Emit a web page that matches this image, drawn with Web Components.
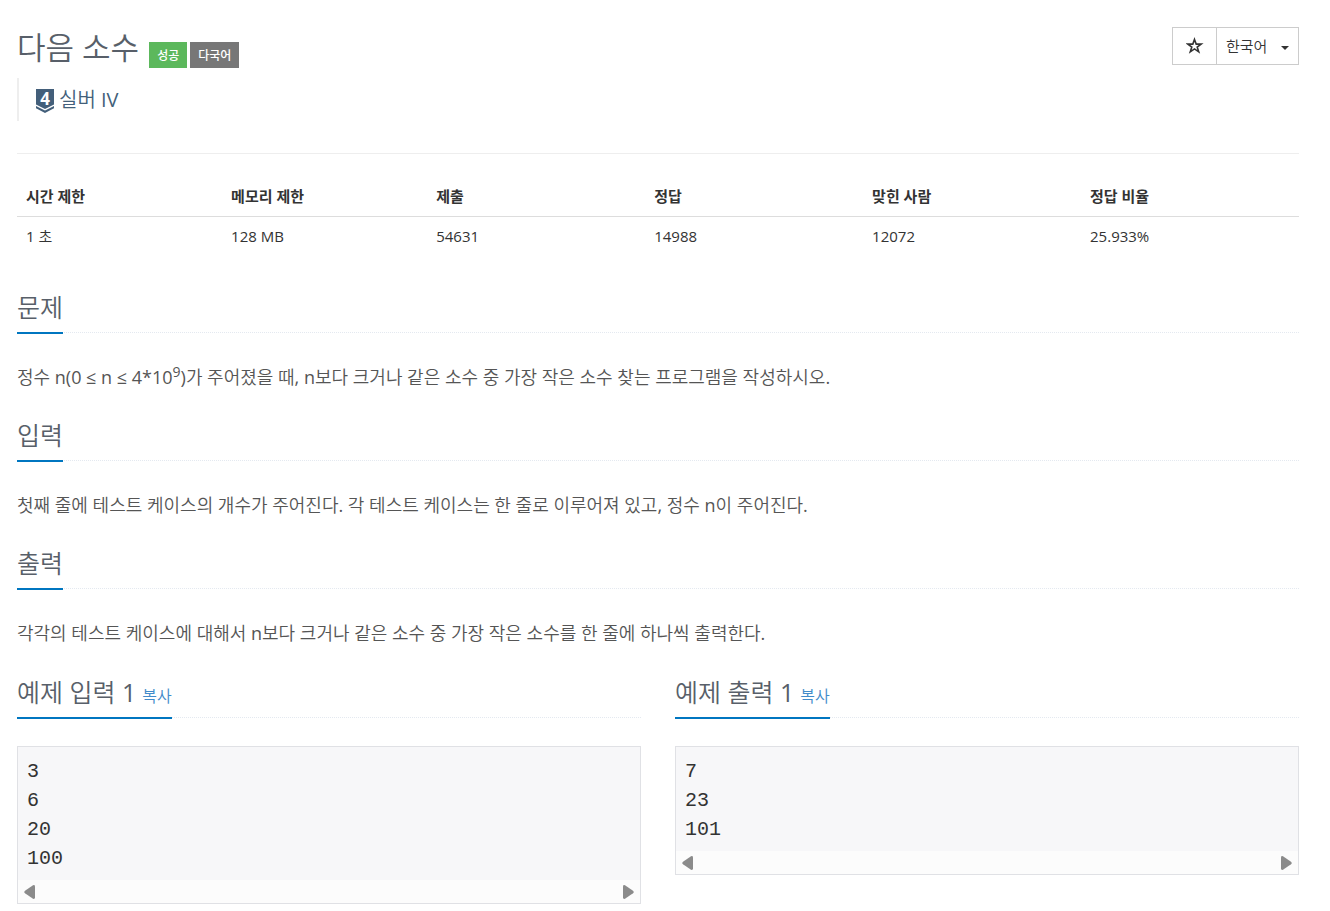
<!DOCTYPE html>
<html lang="ko">
<head>
<meta charset="utf-8">
<meta name="viewport" content="width=device-width, initial-scale=1">
<title>다음 소수</title>
<style>
    body {
        margin: 0;
        padding: 24px 31px 7px 17px;
        background: #fff;
        color: #333;
        font-family: "Open Sans", "Noto Sans CJK KR DemiLight", "Noto Sans CJK KR", sans-serif;
        font-size: 15px;
        line-height: 20px;
    }
    .samples {
        display: grid;
        grid-template-columns: 1fr 1fr;
        gap: 34px;
        align-items: start;
        padding-top: 1px;
    }
</style>
</head>
<body>
    <problem-header>
        다음 소수
        <problem-label slot="labels" type="success">성공</problem-label>
        <problem-label slot="labels">다국어</problem-label>
        <problem-toolbar slot="tools"></problem-toolbar>
    </problem-header>
    <problem-tier level="4">실버 IV</problem-tier>
    <problem-info time="1 초" memory="128 MB" submit="54631" accepted="14988" solved="12072" ratio="25.933%"></problem-info>

    <problem-section heading="문제">정수 n(0 ≤ n ≤ 4*10<sup>9</sup>)가 주어졌을 때, n보다 크거나 같은 소수 중 가장 작은 소수 찾는 프로그램을 작성하시오.</problem-section>
    <problem-section heading="입력">첫째 줄에 테스트 케이스의 개수가 주어진다. 각 테스트 케이스는 한 줄로 이루어져 있고, 정수 n이 주어진다.</problem-section>
    <problem-section heading="출력">각각의 테스트 케이스에 대해서 n보다 크거나 같은 소수 중 가장 작은 소수를 한 줄에 하나씩 출력한다.</problem-section>

    <div class="samples">
        <sample-data heading="예제 입력 1">3
6
20
100</sample-data>
        <sample-data heading="예제 출력 1">7
23
101</sample-data>
    </div>

<script>
class ProblemHeader extends HTMLElement {
    constructor() {
        super();
        this.attachShadow({ mode: 'open' });
    }

    connectedCallback() {
        this.shadowRoot.innerHTML = `
            <style>
                :host {
                    display: flex;
                    justify-content: space-between;
                    align-items: flex-start;
                }
                .title {
                    display: flex;
                    align-items: flex-end;
                    gap: 10px;
                }
                h1 {
                    margin: 0;
                    color: #585f69;
                    font-size: 31px;
                    font-weight: 400;
                    line-height: 46px;
                }
                .labels {
                    display: flex;
                    gap: 3px;
                    padding-bottom: 2px;
                }
                .tools {
                    padding-top: 3px;
                }
            </style>
            <div class="title">
                <h1><slot></slot></h1>
                <div class="labels"><slot name="labels"></slot></div>
            </div>
            <div class="tools"><slot name="tools"></slot></div>
        `;
    }
}

class ProblemLabel extends HTMLElement {
    constructor() {
        super();
        this.attachShadow({ mode: 'open' });
    }

    connectedCallback() {
        this.shadowRoot.innerHTML = `
            <style>
                :host {
                    display: block;
                    padding: 2px 8px 0;
                    background: #777;
                    color: #fff;
                    font-family: "Open Sans", "Noto Sans CJK KR", sans-serif;
                    font-size: 12px;
                    font-weight: 500;
                    line-height: 24px;
                }
                :host([type="success"]) {
                    background: #5cb85c;
                }
            </style>
            <slot></slot>
        `;
    }
}

class ProblemToolbar extends HTMLElement {
    constructor() {
        super();
        this.attachShadow({ mode: 'open' });
    }

    connectedCallback() {
        this.render();
        this.shadowRoot.querySelector('button').addEventListener('click', this.toggleStar.bind(this));
    }

    toggleStar(event) {
        const button = event.currentTarget;
        const pressed = button.getAttribute('aria-pressed') === 'true';
        button.setAttribute('aria-pressed', String(!pressed));
    }

    render() {
        this.shadowRoot.innerHTML = `
            <style>
                :host {
                    display: flex;
                    border: 1px solid #ccc;
                    height: 36px;
                }
                button, select {
                    margin: 0;
                    border: 0;
                    background: #fff;
                    color: #333;
                    font: inherit;
                    cursor: pointer;
                }
                button {
                    display: flex;
                    align-items: center;
                    justify-content: center;
                    width: 44px;
                    padding: 0;
                    border-right: 1px solid #ccc;
                }
                button[aria-pressed="true"] path {
                    fill: #333;
                }
                .language {
                    display: grid;
                    align-items: center;
                }
                .language > * {
                    grid-area: 1 / 1;
                }
                select {
                    appearance: none;
                    height: 36px;
                    padding: 0 30px 0 9px;
                    font-size: 15px;
                }
                .caret {
                    justify-self: end;
                    margin-right: 9px;
                    margin-top: 4px;
                    pointer-events: none;
                }
            </style>
            <button type="button" aria-label="즐겨찾기" aria-pressed="false">
                <svg width="18" height="18" viewBox="0 0 18 18">
                    <path d="M8.500 2.400l1.700 4.700h5l-4 3 1.500 4.700-4.200-2.900-4.200 2.900 1.500-4.700-4-3h5z" fill="none" stroke="#333" stroke-width="1.600"/>
                </svg>
            </button>
            <div class="language">
                <select aria-label="언어">
                    <option>한국어</option>
                </select>
                <svg class="caret" width="8" height="4" viewBox="0 0 8 4"><path d="M0 0h8L4 4z" fill="#333"/></svg>
            </div>
        `;
    }
}

class ProblemTier extends HTMLElement {
    constructor() {
        super();
        this.attachShadow({ mode: 'open' });
    }

    connectedCallback() {
        this.shadowRoot.innerHTML = `
            <style>
                :host {
                    display: block;
                    padding-bottom: 32px;
                    border-bottom: 1px solid #eee;
                    margin-top: 8px;
                }
                blockquote {
                    display: flex;
                    align-items: center;
                    gap: 5px;
                    margin: 0;
                    padding: 0 17px;
                    border-left: 2px solid #eee;
                    color: #435f7a;
                    font-size: 20px;
                    line-height: 43px;
                }
                .badge {
                    display: grid;
                    justify-items: center;
                    margin-top: 3px;
                }
                .badge > * {
                    grid-area: 1 / 1;
                }
                .badge span {
                    color: #fff;
                    font-size: 17px;
                    font-weight: 700;
                    line-height: 19px;
                }
            </style>
            <blockquote>
                <span class="badge">
                    <svg width="18" height="24" viewBox="0 0 18 24" fill="#435f7a">
                        <path d="M0 0h18v15.500L9 20 0 15.500z"/>
                        <path d="M0 17l9 4.500 9-4.500v2.300L9 24l-9-4.700z"/>
                    </svg>
                    <span>${this.getAttribute('level')}</span>
                </span>
                <slot></slot>
            </blockquote>
        `;
    }
}

class ProblemInfo extends HTMLElement {
    constructor() {
        super();
        this.attachShadow({ mode: 'open' });
    }

    connectedCallback() {
        this.shadowRoot.innerHTML = `
            <style>
                :host {
                    display: block;
                    margin: 22px 0 25px;
                }
                table {
                    width: 100%;
                    table-layout: fixed;
                    border-collapse: collapse;
                }
                th, td {
                    box-sizing: border-box;
                    padding: 10px 9px;
                    text-align: left;
                }
                th {
                    width: 17%;
                    border-bottom: 1px solid #ddd;
                    font-family: "Open Sans", "Noto Sans CJK KR", sans-serif;
                    font-weight: 700;
                }
                td {
                    padding: 9px 9px 11px;
                }
                .limit {
                    width: 16%;
                }
            </style>
            <table>
                <thead>
                    <tr>
                        <th class="limit">시간 제한</th>
                        <th class="limit">메모리 제한</th>
                        <th>제출</th>
                        <th>정답</th>
                        <th>맞힌 사람</th>
                        <th>정답 비율</th>
                    </tr>
                </thead>
                <tbody>
                    <tr>
                        <td>${this.getAttribute('time')}</td>
                        <td>${this.getAttribute('memory')}</td>
                        <td>${this.getAttribute('submit')}</td>
                        <td>${this.getAttribute('accepted')}</td>
                        <td>${this.getAttribute('solved')}</td>
                        <td>${this.getAttribute('ratio')}</td>
                    </tr>
                </tbody>
            </table>
        `;
    }
}

class SectionHeadline extends HTMLElement {
    constructor() {
        super();
        this.attachShadow({ mode: 'open' });
    }

    connectedCallback() {
        this.shadowRoot.innerHTML = `
            <style>
                :host {
                    display: flex;
                    border-bottom: 1px dotted #e4e9f0;
                }
                h2 {
                    display: flex;
                    align-items: baseline;
                    margin: 0 0 -2px;
                    border-bottom: 2px solid #0076c0;
                    color: #585f69;
                    font-size: 25px;
                    font-weight: 400;
                    line-height: 50px;
                }
            </style>
            <h2><slot></slot></h2>
        `;
    }
}

class ProblemSection extends HTMLElement {
    constructor() {
        super();
        this.attachShadow({ mode: 'open' });
    }

    connectedCallback() {
        this.shadowRoot.innerHTML = `
            <style>
                :host {
                    display: block;
                }
                p {
                    margin: 0;
                    padding: 29px 0 18px;
                    color: #555;
                    font-size: 18px;
                    line-height: 30px;
                }
                ::slotted(sup) {
                    font-size: 14px;
                    line-height: 0;
                }
            </style>
            <section-headline>${this.getAttribute('heading')}</section-headline>
            <p><slot></slot></p>
        `;
    }
}

class SampleData extends HTMLElement {
    constructor() {
        super();
        this.attachShadow({ mode: 'open' });
    }

    connectedCallback() {
        this.render();
        this.shadowRoot.querySelector('.copy').addEventListener('click', this.copy.bind(this));
    }

    copy() {
        navigator.clipboard.writeText(this.textContent);
    }

    render() {
        this.shadowRoot.innerHTML = `
            <style>
                :host {
                    display: block;
                    min-width: 0;
                }
                button {
                    margin: 0;
                    padding: 0;
                    border: 0;
                    background: none;
                    font: inherit;
                    cursor: pointer;
                }
                .copy {
                    margin-left: 6px;
                    color: #428bca;
                    font-size: 16px;
                    line-height: 20px;
                }
                .box {
                    margin-top: 28px;
                    border: 1px solid #e0e1e5;
                    background: #f7f7f9;
                }
                pre {
                    margin: 0;
                    padding: 10px 9px 7px;
                    color: #333;
                    font-family: "Liberation Mono", monospace;
                    font-size: 20px;
                    line-height: 29px;
                    overflow: hidden;
                }
                .scroll {
                    display: flex;
                    align-items: center;
                    justify-content: space-between;
                    height: 23px;
                    padding: 0 6px;
                    background: #fcfcfc;
                }
                .scroll button, svg {
                    display: block;
                }
            </style>
            <section-headline>${this.getAttribute('heading')} <button class="copy" type="button">복사</button></section-headline>
            <div class="box">
                <pre><slot></slot></pre>
                <div class="scroll">
                    <button type="button" aria-label="왼쪽">
                        <svg width="11" height="14" viewBox="0 0 11 14" fill="#8b8b8b"><path d="M9 .2Q11-.4 11 1.500v11q0 1.900-2 1.300L1 8.300Q-.5 7 1 5.700z"/></svg>
                    </button>
                    <button type="button" aria-label="오른쪽">
                        <svg width="11" height="14" viewBox="0 0 11 14" fill="#8b8b8b"><path d="M2 .2Q0-.4 0 1.500v11q0 1.900 2 1.300L10 8.300Q11.500 7 10 5.700z"/></svg>
                    </button>
                </div>
            </div>
        `;
    }
}

customElements.define('problem-header', ProblemHeader);
customElements.define('problem-label', ProblemLabel);
customElements.define('problem-toolbar', ProblemToolbar);
customElements.define('problem-tier', ProblemTier);
customElements.define('problem-info', ProblemInfo);
customElements.define('section-headline', SectionHeadline);
customElements.define('problem-section', ProblemSection);
customElements.define('sample-data', SampleData);
</script>
</body>
</html>
